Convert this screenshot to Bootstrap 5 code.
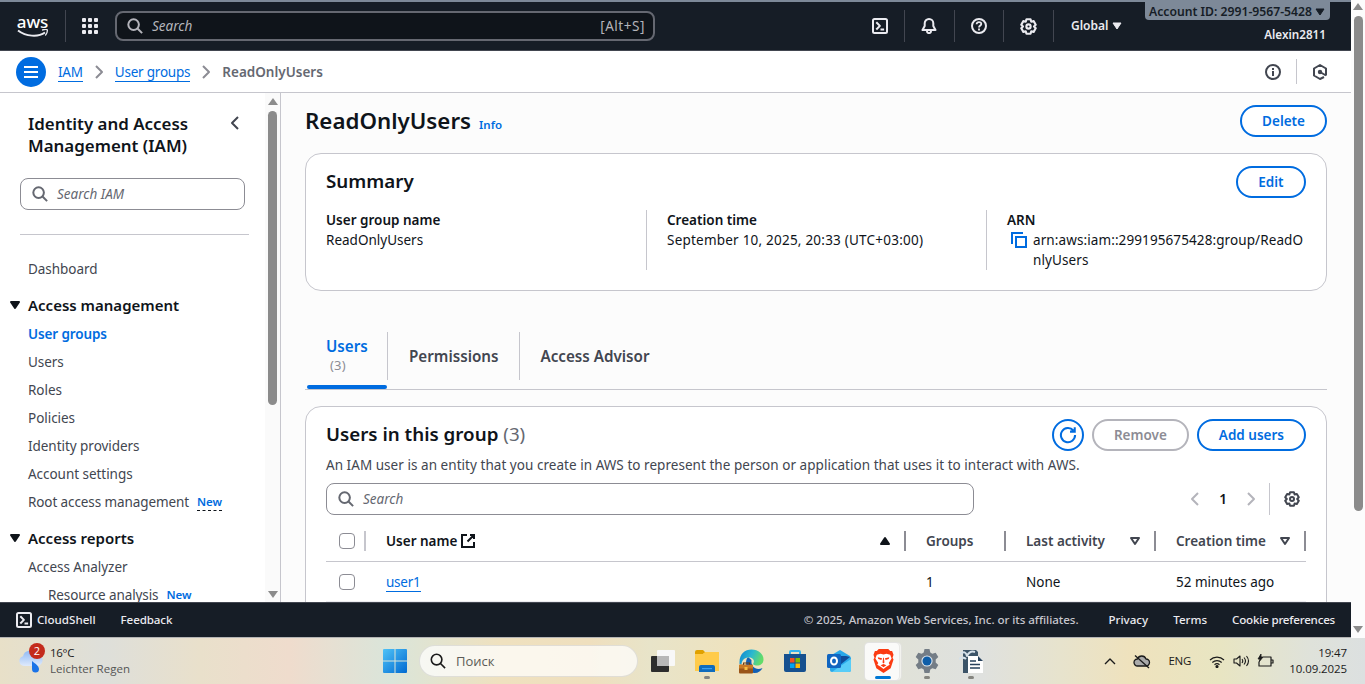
<!DOCTYPE html>
<html lang="en">
<head>
<meta charset="utf-8">
<title>ReadOnlyUsers | IAM</title>
<link href="https://cdn.jsdelivr.net/npm/bootstrap@5.3.0/dist/css/bootstrap.min.css" rel="stylesheet">
<script src="https://cdn.jsdelivr.net/npm/bootstrap@5.3.0/dist/js/bootstrap.bundle.min.js"></script>
<style>
:root{--blue:#006ce0;--ink:#0f141a;--soft:#424650;--rule:#c6c6cd;--night:#161d26}
body{width:1365px;height:684px;overflow:hidden;font-family:"Noto Sans","Open Sans",sans-serif;font-size:13.5px;line-height:20px;color:var(--ink);background:#fff}
svg{display:block;flex:none;fill:none;stroke:currentColor;stroke-width:2;stroke-linejoin:round}
.screen{height:684px}
.browser{height:638px}
.app{width:1351px}
.pagebar{width:14px;background:#fcfcfc;padding-top:3px}
.thumb{background:#8b8b8b;border-radius:5px}
.arr{width:0;height:0;border:5px solid transparent}
.arr-up{border-bottom:7px solid #8b8b8b;border-top:0}
.arr-dn{border-top:7px solid #8b8b8b;border-bottom:0}
/* top bar */
.topbar{height:51px;background:var(--night);border-top:2px solid #7d8998;border-bottom:1px solid #424650;color:#ebebf0}
.logo-box{width:65px}
.aws-word{font:500 17px/14px "Noto Sans",sans-serif;letter-spacing:-.1px;color:#fff}
.vline{width:1px;background:#424650;height:32px}
.dots{stroke:none;fill:#ebebf0}
.topsearch{width:540px;height:30px;border:2px solid #656871;border-radius:8px;background:#0f141a;color:#b4b4bb;margin-left:17px;padding:0 8px 0 10px}
.kbd-hint{letter-spacing:.55px}
.topcell{width:49px;display:flex;justify-content:center}
.account{background:#7d8998;color:var(--night);height:18px;border-radius:0 0 4px 4px;font-size:12.2px;line-height:17px;font-weight:600;padding:1px 2px 0 4px}
.account svg,.region svg{stroke-width:1}
.region{margin-left:17px;font-size:12px;font-weight:600}
/* breadcrumb bar */
.crumbs{height:42px;border-bottom:1px solid var(--rule);background:#fff}
.crumbs .chev{margin:0 8px;color:#8c8c94}
.menu-btn{width:30px;height:30px;border-radius:50%;background:var(--blue);color:#fff}
.ul-link{color:var(--blue);text-decoration:none;border-bottom:1px solid var(--blue);line-height:17px;letter-spacing:-.22px}
/* side navigation */
.side{width:281px;border-right:1px solid var(--rule);background:#fff}
.sidenav{width:265px;overflow:hidden}
.sidenav h2{font-size:16.9px;line-height:22px;font-weight:600;margin:0}
.field{height:32px;border:1px solid #8c8c94;border-radius:8px;background:#fff;color:#656871;padding-left:11px}
.navgroup{font-size:15px;font-weight:600;height:28px;padding-left:7px;margin-top:8px}
.navgroup svg{margin-right:5px}
.navitem{height:28px;line-height:20px;padding:4px 0 4px 28px;color:var(--soft);letter-spacing:-.04px}
.tag-new{font-size:11.5px;font-weight:600;color:var(--blue);line-height:20px}
.dashed{border-bottom:1px dashed #0f141a;height:19px}
.sidebar-scroll{width:15px;background:#fafafa;padding:5px 0 4px}
/* content */
.main{background:#fcfcfc;padding:12px 24px 0;overflow:hidden}
.main h1{font-size:22.3px;line-height:30px;font-weight:600;margin:0}
.panel{border:1px solid var(--rule);border-radius:16px;background:#fff;padding:12px 20px 0}
.panel h2{font-size:18.75px;line-height:24px;font-weight:600;margin:-2px 0 0}
.pill{height:32px;border:2px solid var(--blue);border-radius:20px;color:var(--blue);font-size:13.5px;font-weight:600;line-height:20px;padding:4px 20px;background:#fff}
.pill-off{border-color:#b4b4bb;color:#8c8c94}
.pill-round{width:32px;padding:0}
.fact{height:60px}
.fact+.fact{border-left:1px solid var(--rule);padding-left:20px}
.tabs{height:58px;margin-top:41px;border-bottom:1px solid var(--rule);font-size:15.2px;font-weight:600;color:var(--soft)}
.tabs>.tab-off{padding:14px 20px 0 21px}
.tab-sep{width:1px;height:48px;background:var(--rule)}
.tab-on{width:80px;margin-left:2px;height:57px;color:var(--blue);padding:4px 0 0 19px;position:relative}
.tab-on::after{content:"";position:absolute;left:0;right:0;bottom:0;height:4px;border-radius:2px;background:var(--blue)}
.tab-count{font-weight:400;font-size:13px;line-height:18px;color:#8c8c94;padding-left:4px;letter-spacing:.2px}
.grid{table-layout:fixed;width:980px;margin:6px 0 0;border-collapse:collapse}
.grid th{height:40px;padding:0;font-weight:600;color:var(--soft);border-bottom:1px solid var(--rule)}
.grid td{height:40px;padding:1px 0 0 20px;border-bottom:1px solid #ebebf0}
.grid th>div{height:20px;padding-left:20px;padding-right:11px;border-right:2px solid #8c8c94;position:relative;top:.5px}
.grid .form-check-input{width:16px;height:16px;margin:0;border:1px solid #8c8c94;border-radius:4px;display:block}
/* footer */
.foot{height:35px;background:var(--night);border-top:1px solid #424650;color:#ebebf0;font-size:11.6px;font-weight:500}
/* taskbar */
.taskbar{height:46px;font-family:"Open Sans","Noto Sans",sans-serif;font-size:11.5px;line-height:16px;color:#1b1b1b;
background:linear-gradient(90deg,#e8e0c8 0,#dedfda 105px,#e9e0cb 200px,#efdccd 290px,#dae5da 390px,#efe1bf 500px,#efdfbe 590px,#e8e4c9 650px,#efe2bd 745px,#e1e2d4 850px,#dfe1df 980px,#e7e3cd 1060px,#efe2bd 1130px,#e8e5c2 1220px,#dfe2da 1310px,#dce0e0 1365px)}
.winsearch{width:219px;height:32px;border-radius:16px;background:rgba(255,255,255,.72);border:1px solid rgba(0,0,0,.1);font-size:13px;margin-left:12px;padding-left:10px}
.tbicon{width:44px;height:46px;position:relative;display:flex;align-items:center;justify-content:center}
.tbicon svg,.weather svg,.winlogo{stroke:none}
.run{position:absolute;bottom:5px;width:6px;height:3px;border-radius:2px;background:#858580}
.run-on{width:16px;left:14px;background:#0078d4}
.tb-active{position:absolute;left:3px;top:4px;width:36px;height:39px;border-radius:5px;background:rgba(255,255,255,.6);border:1px solid rgba(0,0,0,.07)}
.count{position:absolute;left:11px;top:-5px;width:16px;height:16px;border-radius:50%;background:#c42b1c;color:#fff;font-size:11px;text-align:center;line-height:16px}
</style>
</head>
<body>
<svg width="0" height="0" class="position-absolute">
<symbol id="i-search" viewBox="0 0 16 16"><circle cx="6.6" cy="6.6" r="5.3"/><path d="m10.5 10.5 4.600 4.600"/></symbol>
<symbol id="i-gear" viewBox="0 0 16 16"><path d="M6.07 1.200h3.860l.67 2.300 2.260-.53 1.930 3.340L13.200 8l1.590 1.690-1.930 3.340-2.260-.53-.67 2.300H6.070l-.67-2.300-2.260.53-1.930-3.340L2.800 8 1.210 6.310l1.930-3.340 2.260.53z"/><circle cx="8" cy="8" r="2"/></symbol>
<symbol id="i-shell" viewBox="0 0 16 16"><rect x="1" y="1" width="14" height="14" rx="1.5"/><path d="m4.300 4.300 3.600 3.600-3.600 3.600M8.500 11.500h3.600"/></symbol>
<symbol id="i-left" viewBox="0 0 16 16"><path d="M11 2 5 8l6 6"/></symbol>
<symbol id="i-right" viewBox="0 0 16 16"><path d="m5 2 6 6-6 6"/></symbol>
<symbol id="i-down" viewBox="0 0 16 16"><path fill="currentColor" d="M4 5h8l-4 6z"/></symbol>
<symbol id="i-sort" viewBox="0 0 16 16"><path d="M4 5h8l-4 6z"/></symbol>
</svg>
<div class="screen d-flex flex-column">
<div class="browser d-flex">
<div class="app d-flex flex-column">
  <header class="topbar d-flex align-items-center flex-shrink-0">
    <div class="logo-box d-flex flex-column align-items-center"><span class="aws-word">aws</span><svg width="32" height="9" viewBox="0 0 32 9"><path stroke-width="2" d="M1 1.500c8 6 20 7 27 2"/><path stroke-width="1.300" d="M25 1c3-.8 5-.7 5.300 0 .2 1.500-.6 4-2 5.500"/></svg></div>
    <div class="vline"></div>
    <svg class="dots ms-3" width="16" height="16" viewBox="0 0 16 16"><g id="dots"><rect width="4" height="4" rx="1"/><rect x="6" width="4" height="4" rx="1"/><rect x="12" width="4" height="4" rx="1"/></g><use href="#dots" y="6"/><use href="#dots" y="12"/></svg>
    <div class="topsearch d-flex align-items-center"><svg width="16" height="16"><use href="#i-search"/></svg><em class="ms-2 flex-grow-1" style="padding-left:1px">Search</em><span class="kbd-hint">[Alt+S]</span></div>
    <div class="d-flex align-items-center" style="margin-left:200px">
      <div class="topcell"><svg width="16" height="16"><use href="#i-shell"/></svg></div><div class="vline"></div>
      <div class="topcell"><svg width="16" height="16" viewBox="0 0 16 16" style="margin-right:2px"><path d="M8 1a4.300 4.300 0 0 0-4.300 4.300V8L1.500 12h13L12.300 8V5.300A4.300 4.300 0 0 0 8 1zM5.800 12.500C6 16 10 16 10.200 12.500"/></svg></div><div class="vline"></div>
      <div class="topcell" style="width:48px"><svg width="16" height="16" viewBox="0 0 16 16"><circle cx="8" cy="8" r="7"/><path stroke-width="1.800" d="M5.600 6.300C5.800 3.300 10.300 3.500 10.300 6 10.300 7.500 8 7.600 8 9.500M8 10.500v2"/></svg></div><div class="vline"></div>
      <div class="topcell"><svg width="17" height="17"><use href="#i-gear"/></svg></div><div class="vline"></div>
      <div class="region d-flex align-items-center">Global<svg width="16" height="16" style="margin-left:1px"><use href="#i-down"/></svg></div>
    </div>
    <div class="ms-auto align-self-start d-flex flex-column align-items-end" style="margin-right:21px">
      <div class="account d-flex align-items-center">Account ID: 2991-9567-5428<svg width="16" height="16"><use href="#i-down"/></svg></div>
      <div style="font-size:11.7px;font-weight:600;margin:4px 4px 0 0">Alexin2811</div>
    </div>
  </header>
  <nav class="crumbs d-flex align-items-center flex-shrink-0 ps-3">
    <div class="menu-btn d-flex align-items-center justify-content-center"><svg width="14" height="14" viewBox="0 0 14 14"><path d="M0 2h14M0 7h14M0 12h14"/></svg></div>
    <a class="ul-link" href="#" style="margin:2px 0 0 12px">IAM</a>
    <svg class="chev" width="16" height="16"><use href="#i-right"/></svg>
    <a class="ul-link" href="#" style="margin-top:2px">User groups</a>
    <svg class="chev" width="16" height="16"><use href="#i-right"/></svg>
    <span style="font-weight:600;color:#656871">ReadOnlyUsers</span>
    <div class="ms-auto d-flex align-items-center" style="margin-right:23px;color:var(--soft)">
      <svg width="16" height="16" viewBox="0 0 16 16"><circle cx="8" cy="8" r="7"/><path d="M8 4v2M8 7v5"/></svg>
      <div class="vline" style="margin:0 15px;height:25px;background:var(--rule)"></div>
      <svg width="16" height="16" viewBox="0 0 16 16"><path d="M12 13 8 15l-6-3.500v-7L8 1l6 3.500v7"/><path d="m8 8 6 3.500"/><circle cx="8" cy="8" r="1.200" fill="currentColor"/></svg>
    </div>
  </nav>
  <div class="d-flex flex-grow-1" style="min-height:0">
    <aside class="side d-flex flex-shrink-0">
      <div class="sidenav">
        <div class="d-flex" style="padding:20px 22px 0 28px"><h2 class="flex-grow-1 text-nowrap">Identity and Access<br>Management (IAM)</h2><svg style="margin-top:2px;color:var(--soft)" width="16" height="16"><use href="#i-left"/></svg></div>
        <div class="field d-flex align-items-center" style="margin:21px 20px 0"><svg width="16" height="16"><use href="#i-search"/></svg><em class="ms-2" style="padding-left:1px">Search IAM</em></div>
        <div style="height:1px;background:var(--rule);margin:24px 16px 20px 20px"></div>
        <div class="navitem">Dashboard</div>
        <div class="navgroup d-flex align-items-center"><svg width="16" height="16"><use href="#i-down"/></svg>Access management</div>
        <div class="navitem" style="color:var(--blue);font-weight:600;letter-spacing:-.12px;margin-top:1px">User groups</div>
        <div class="navitem">Users</div>
        <div class="navitem">Roles</div>
        <div class="navitem">Policies</div>
        <div class="navitem">Identity providers</div>
        <div class="navitem">Account settings</div>
        <div class="navitem d-flex" style="letter-spacing:-.1px">Root access management<span class="tag-new dashed ms-2">New</span></div>
        <div class="navgroup d-flex align-items-center"><svg width="16" height="16"><use href="#i-down"/></svg>Access reports</div>
        <div class="navitem" style="margin-top:1px">Access Analyzer</div>
        <div class="navitem d-flex" style="padding-left:48px;letter-spacing:-.1px">Resource analysis<span class="tag-new ms-2">New</span></div>
      </div>
      <div class="sidebar-scroll d-flex flex-column align-items-center"><div class="arr arr-up"></div><div class="thumb" style="width:9px;height:294px;margin-top:6px"></div><div class="arr arr-dn mt-auto"></div></div>
    </aside>
    <main class="main flex-grow-1">
      <div class="d-flex align-items-center"><h1>ReadOnlyUsers</h1><span class="tag-new" style="margin:7px 0 0 8px">Info</span><button class="btn pill ms-auto">Delete</button></div>
      <section class="panel" style="height:138px;margin-top:16px">
        <div class="d-flex align-items-center"><h2>Summary</h2><button class="btn pill ms-auto" style="padding:4px 20.500px">Edit</button></div>
        <div class="d-flex" style="margin-top:12px">
          <div class="fact" style="width:320px"><div class="fw-semibold">User group name</div>ReadOnlyUsers</div>
          <div class="fact" style="width:340px"><div class="fw-semibold">Creation time</div><span style="letter-spacing:.22px">September 10, 2025, 20:33 (UTC+03:00)</span></div>
          <div class="fact flex-grow-1"><div class="fw-semibold">ARN</div><div class="d-flex"><svg style="margin:2px 6px 0 4px;color:var(--blue);stroke-linejoin:miter" width="16" height="16" viewBox="0 0 16 16"><path d="M5 5h10v10H5z"/><path d="M1 12V1h11"/></svg><span class="text-nowrap" style="letter-spacing:.1px">arn:aws:iam::299195675428:group/ReadO<br>nlyUsers</span></div></div>
        </div>
      </section>
      <div class="tabs d-flex"><div class="tab-on">Users<div class="tab-count">(3)</div></div><div class="tab-sep"></div><div class="tab-off">Permissions</div><div class="tab-sep"></div><div class="tab-off">Access Advisor</div></div>
      <section class="panel" style="height:300px;margin-top:16px">
        <div class="d-flex align-items-center"><h2>Users in this group <span style="font-weight:400;color:#656871">(3)</span></h2>
          <div class="ms-auto d-flex gap-2"><button class="btn pill pill-round d-flex align-items-center justify-content-center"><svg width="18" height="18" viewBox="0 0 16 16" style="stroke-width:1.800;stroke-linejoin:miter"><path d="M14.300 8A6.300 6.300 0 1 1 12.800 4M14 1v4H9.800"/></svg></button><button class="btn pill pill-off">Remove</button><button class="btn pill">Add users</button></div></div>
        <div style="color:var(--soft);margin-top:4px;letter-spacing:.042px">An IAM user is an entity that you create in AWS to represent the person or application that uses it to interact with AWS.</div>
        <div class="d-flex align-items-center" style="margin-top:8px">
          <div class="field d-flex align-items-center" style="width:648px"><svg width="16" height="16"><use href="#i-search"/></svg><em class="ms-2" style="padding-left:1px">Search</em></div>
          <div class="ms-auto d-flex align-items-center" style="padding-right:6px"><svg style="color:#b4b4bb" width="16" height="16"><use href="#i-left"/></svg><span class="fw-semibold text-center" style="width:40px">1</span><svg style="color:#b4b4bb" width="16" height="16"><use href="#i-right"/></svg><div style="width:1px;height:32px;background:var(--rule);margin:0 14px 0 10px"></div><svg style="color:var(--soft)" width="16" height="16"><use href="#i-gear"/></svg></div>
        </div>
        <table class="grid">
          <colgroup><col style="width:40px"><col style="width:540px"><col style="width:100px"><col style="width:150px"><col style="width:150px"></colgroup>
          <tr><th><div class="d-flex align-items-center" style="padding:0 0 0 13px;border-color:var(--rule)"><input class="form-check-input" type="checkbox"></div></th>
          <th style="color:var(--ink)"><div class="d-flex align-items-center">User name<svg style="margin-left:3px;stroke-linejoin:miter" width="16" height="16" viewBox="0 0 16 16"><path d="M7 2H2v12h12V9M10 2h4v4M14 2 7.500 8.500"/></svg><svg class="ms-auto" width="16" height="16" viewBox="0 0 16 16"><path fill="currentColor" d="M4 11h8L8 5z"/></svg></div></th>
          <th><div>Groups</div></th>
          <th><div class="d-flex align-items-center">Last activity<svg class="ms-auto" width="16" height="16"><use href="#i-sort"/></svg></div></th>
          <th><div class="d-flex align-items-center">Creation time<svg class="ms-auto" width="16" height="16"><use href="#i-sort"/></svg></div></th></tr>
          <tr><td style="padding-left:13px"><input class="form-check-input" type="checkbox"></td><td><a class="ul-link" href="#">user1</a></td><td>1</td><td>None</td><td>52 minutes ago</td></tr>
        </table>
      </section>
    </main>
  </div>
  <footer class="foot d-flex align-items-center flex-shrink-0 px-3">
    <svg width="16" height="16"><use href="#i-shell"/></svg><span style="margin-left:5px">CloudShell</span><span style="margin-left:25px;letter-spacing:-.12px">Feedback</span>
    <span class="ms-auto" style="color:#c6c6cd;letter-spacing:-.055px">© 2025, Amazon Web Services, Inc. or its affiliates.</span><span style="margin-left:30px">Privacy</span><span style="margin-left:25px">Terms</span><span style="margin-left:25px;letter-spacing:-.21px">Cookie preferences</span>
  </footer>
  <div style="height:1px;background:#b4b4b4" class="flex-shrink-0"></div>
</div>
<div class="pagebar d-flex flex-column align-items-center"><div class="arr arr-up"></div><div class="thumb" style="width:9px;height:495px;margin-top:6px"></div><div class="arr arr-dn mt-auto" style="margin-bottom:5px"></div></div>
</div>
<div class="taskbar d-flex align-items-center">
  <div class="weather position-relative d-flex" style="margin-left:19px;width:30px"><svg width="25" height="23" viewBox="0 0 25 23"><defs><linearGradient id="gc" x2="0" y2="1"><stop stop-color="#8fb9f5"/><stop offset="1" stop-color="#dfeafc"/></linearGradient></defs><path fill="url(#gc)" d="M5 16a5 5 0 0 1-1-9.800 7 7 0 0 1 13-2A6 6 0 0 1 19 16z"/><path fill="#1a73e8" d="M13 11c3 2.500 7 5 7 8a3.500 3.500 0 0 1-7 0z"/></svg><span class="count" style="left:10px;top:-7px">2</span></div>
  <div style="margin-left:1px;width:333px"><div style="letter-spacing:-.3px">16°C</div><div style="color:#555;letter-spacing:.05px">Leichter Regen</div></div>
  <svg class="winlogo" width="24" height="24" viewBox="0 0 24 24"><defs><linearGradient id="gw" x2="1" y2="1"><stop stop-color="#4fc3f7"/><stop offset="1" stop-color="#0069d1"/></linearGradient></defs><path fill="url(#gw)" d="M0 1a1 1 0 0 1 1-1h10.500v11.500H0zM12.500 0H23a1 1 0 0 1 1 1v10.500H12.500zM0 12.500h11.500V24H1a1 1 0 0 1-1-1zM12.500 12.500H24V23a1 1 0 0 1-1 1H12.500z"/></svg>
  <div class="winsearch d-flex align-items-center"><svg width="16" height="16" style="stroke-width:1.600"><use href="#i-search"/></svg><span style="margin-left:10px;color:#5c5c58">Поиск</span></div>
  <div class="d-flex" style="margin-left:3px">
    <div class="tbicon"><svg width="24" height="24" viewBox="0 0 24 24"><rect x="0" y="7" width="18" height="16" rx="1" fill="#2d2d2d"/><rect x="6" y="1" width="18" height="16" rx="1" fill="#f8f8f8"/><path fill="#b8b8b8" d="M6 7h12v10H6z"/></svg></div>
    <div class="tbicon"><svg width="24" height="24" viewBox="0 0 24 24"><path fill="#e0a100" d="M0 3a2 2 0 0 1 2-2h6l3 3h-2L7 7H0z"/><path fill="#ffcb4a" d="M0 5h8l2-2h14v19H0z"/><path fill="#0f6cbd" d="M4 23v-5a2 2 0 0 1 2-2h12a2 2 0 0 1 2 2v5z"/><path fill="#3aa0f0" d="M7 19h10v1.200H7z"/></svg><i class="run"></i></div>
    <div class="tbicon"><svg width="25" height="25" viewBox="0 0 25 25"><defs><linearGradient id="ge" x2="1" y2=".3"><stop stop-color="#0f83d0"/><stop offset=".55" stop-color="#2bb8cf"/><stop offset="1" stop-color="#62dc6a"/></linearGradient></defs><path fill="#1260b5" d="M9 8c-4 4-2 15 6 16 4 .3 7-2 8.500-5-6 3-12-1-11-8z"/><path fill="url(#ge)" d="M.5 13C.5 5 6 .5 12.500.5c7 0 12 4.500 12 10 0 4-3 6-6.500 6-3 0-4.500-1-3.500-2.500C16 11 13.500 8.500 10 8.500 5.500 8.500 3 11 2.500 15H.500z"/><path fill="#6b3b10" d="M4 16v-2.500h7V16h-1v-1.500H5V16z"/><rect y="15.500" width="14" height="9" rx="1" fill="#9a5418"/><path fill="#c97a24" d="M0 16h14v3.500H0z"/><path fill="#f5bd40" d="M5.500 18h3v3h-3z"/></svg></div>
    <div class="tbicon"><svg width="24" height="24" viewBox="0 0 24 24"><path fill="#35b4ee" d="M6 6V3a2 2 0 0 1 2-2h8a2 2 0 0 1 2 2v3h-2V3H8v3z"/><path fill="#16508f" d="M1 5h22v16a2 2 0 0 1-2 2H3a2 2 0 0 1-2-2z"/><path fill="#f25022" d="M7 9h4.500v4.500H7z"/><path fill="#7fba00" d="M12.500 9H17v4.500h-4.500z"/><path fill="#00a4ef" d="M7 14.500h4.500V19H7z"/><path fill="#ffb900" d="M12.500 14.500H17V19h-4.500z"/></svg></div>
    <div class="tbicon"><svg width="24" height="24" viewBox="0 0 24 24"><path fill="#28a8ea" d="m3 7 10-6 10 6 1 2v12a2 2 0 0 1-2 2H5a2 2 0 0 1-2-2z"/><path fill="#0f4c9a" d="M13 7h6l4 1-10 8z"/><path fill="#58cdf8" d="m12 18 12-8v11a2 2 0 0 1-2 2H5z"/><rect y="5" width="14" height="14" rx="1.500" fill="#0f64c0"/><ellipse cx="7" cy="12" rx="3" ry="3.500" fill="none" style="stroke:#fff;stroke-width:2"/></svg></div>
    <div class="tbicon"><i class="tb-active" style="width:38px"></i><i class="tb-active"></i><svg class="position-relative" width="21" height="24" viewBox="0 0 22 25"><path fill="#fb3b12" d="M6 0h10l2 2h2l1.500 4-1 3 1 2-3 9L11 25 3.500 20 .5 11l1-2-1-3L2 2h2z"/><path fill="#fff" d="m4 6 4-1.200 3 1 3-1L18 6l1.500 4-3 4.500 1 2-3.500 2L11 21l-3-2.500-3.500-2 1-2-3-4.500z"/><path fill="#fb3b12" d="m5 8.500 4.500 1-.7 2L5.500 10.500zM17 8.500l-4.500 1 .7 2 3.300-1zM10.600 9h.8l.6 5-1 1-1-1zM8 17l3-1.300 3 1.300-3 2z"/></svg><i class="run run-on"></i></div>
    <div class="tbicon"><svg width="24" height="24" viewBox="0 0 24 24"><path fill="#747d86" d="M9.500 0h5l.8 3.500 2 1.200 3.400-1L23.300 8l-2.600 2.500v3l2.600 2.500-2.600 4.300-3.400-1-2 1.200-.8 3.500h-5l-.8-3.500-2-1.200-3.400 1L.7 16l2.600-2.500v-3L.7 8l2.600-4.300 3.400 1 2-1.200z"/><circle cx="12" cy="12" r="5.600" fill="#dfe6ec"/><circle cx="12" cy="12" r="4.500" fill="#0f5ea8"/></svg><i class="run"></i></div>
    <div class="tbicon"><svg width="25" height="25" viewBox="0 0 25 25"><path fill="#3c5468" d="M4 1h13l2 2v21H4z"/><path fill="#fff" d="M9 7h10l5 5v12H9z"/><path fill="#27415c" d="M19 7v5h5z"/><path style="stroke:#27415c;stroke-width:1.300" d="M11 12h6M11 15.500h10M11 19h10"/><path fill="none" style="stroke:#d6e1ea;stroke-width:2" d="M1 5c4-3 6-2 7 2 2-4 5-5 8-4M0 10c3-2 5-2 7 0"/></svg><i class="run"></i></div>
  </div>
  <div class="ms-auto d-flex align-items-center" style="padding-right:18px">
    <svg width="12" height="8" viewBox="0 0 12 8" style="stroke-width:1.400"><path d="m1 7 5-5 5 5"/></svg>
    <svg width="18" height="15" viewBox="0 0 18 15" style="margin-left:17px;stroke-width:1.300"><path fill="#aaa" d="M4.500 12a3.500 3.500 0 0 1 0-7 4.500 4.500 0 0 1 8.500 0 3.500 3.500 0 0 1 0 7z"/><path d="m2 1.500 14 12.500"/></svg>
    <span style="margin-left:17px;letter-spacing:-.3px">ENG</span>
    <svg width="16" height="13" viewBox="0 0 16 13" style="margin-left:18px;stroke-width:1.200"><path d="M1 5a10 10 0 0 1 14 0M3.300 7.500a7 7 0 0 1 9.400 0M5.500 9.700a4 4 0 0 1 5 0"/><circle cx="8" cy="11.500" r="1" fill="currentColor"/></svg>
    <svg width="17" height="14" viewBox="0 0 17 14" style="margin-left:8px;stroke-width:1.100"><path d="M1 5h2.500L7 2v10L3.500 9H1zM9 5q1.500 2 0 4M11 3.500q3 3.500 0 7M13.500 2q4 5 0 10"/></svg>
    <svg width="17" height="14" viewBox="0 0 17 14" style="margin-left:7px;stroke-width:1.200"><path d="M6 3h8v9H2V8M14.500 6h1.500v3h-1.500"/><path fill="currentColor" stroke-width=".8" d="M4 0 1 5h2L2 8l4-5H4z"/></svg>
    <div class="text-end text-nowrap" style="margin-left:15px;width:58px;letter-spacing:-.1px"><div>19:47</div><div>10.09.2025</div></div>
  </div>
</div>
</div>
</body>
</html>
